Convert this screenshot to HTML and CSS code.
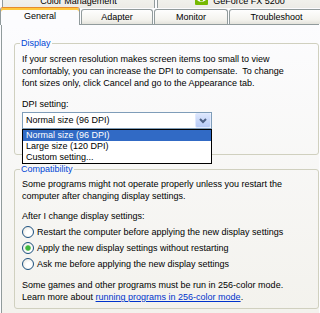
FILE: index.html
```html
<!DOCTYPE html>
<html lang="en">
<head>
  <meta charset="UTF-8" />
  <title>Display Properties - Advanced</title>
  <link rel="stylesheet" href="styles.css">
</head>
<body>
  <div class="tabs-back">
    <div class="tab-back color-tab"><span>Color Management</span></div>
    <div class="tab-back gpu-tab">
      <span>
        <svg class="nv" width="13" height="10" viewBox="0 0 13 10">
          <rect x="0" y="0" width="13" height="10" rx="1" fill="#76b900"/>
          <path d="M2 5 Q6 1 11 5 Q6 9 2 5Z" fill="#fff"/>
          <circle cx="6.5" cy="5" r="1.6" fill="#76b900"/>
        </svg>GeForce FX 5200
      </span>
    </div>
  </div>

  <div class="tabs-front">
    <div class="tab tab-active">General</div>
    <div class="tab adapter">Adapter</div>
    <div class="tab monitor">Monitor</div>
    <div class="tab trouble">Troubleshoot</div>
  </div>

  <div class="panel">
    <fieldset class="group display">
      <legend>Display</legend>
      <p>If your screen resolution makes screen items too small to view<br>comfortably, you can increase the DPI to compensate.&nbsp; To change<br>font sizes only, click Cancel and go to the Appearance tab.</p>
      <p class="label">DPI setting:</p>
      <div class="combo">
        <div class="combo-value">Normal size (96 DPI)</div>
        <span class="combo-btn">
          <svg width="14" height="13" viewBox="0 0 14 13">
            <path d="M4 5 L7 8 L10 5" fill="none" stroke="#4d6185" stroke-width="2"/>
          </svg>
        </span>
        <ul class="combo-list">
          <li class="sel">Normal size (96 DPI)</li>
          <li>Large size (120 DPI)</li>
          <li>Custom setting...</li>
        </ul>
      </div>
    </fieldset>

    <fieldset class="group compat">
      <legend>Compatibility</legend>
      <p>Some programs might not operate properly unless you restart the<br>computer after changing display settings.</p>
      <p class="after">After I change display settings:</p>
      <div class="option"><span class="radio"></span>Restart the computer before applying the new display settings</div>
      <div class="option"><span class="radio checked"></span>Apply the new display settings without restarting</div>
      <div class="option"><span class="radio"></span>Ask me before applying the new display settings</div>
      <p class="note">Some games and other programs must be run in 256-color mode.<br>Learn more about <a href="#">running programs in 256-color mode</a>.</p>
    </fieldset>
  </div>
</body>
</html>
```

FILE: styles.css
```css
* {
  margin: 0;
  padding: 0;
  box-sizing: border-box;
}

body {
  font-family: "Liberation Sans", Arial, sans-serif;
  font-size: 9px;
  color: #000;
  background: #fcfcfe;
  width: 320px;
  height: 313px;
  overflow: hidden;
}

/* back row of tabs, mostly cut off */
.tabs-back {
  display: flex;
  height: 8px;
  overflow: hidden;
  padding-left: 2px;
}

.tab-back {
  height: 8px;
  border-left: 1px solid #919b9c;
  border-right: 1px solid #919b9c;
  background: linear-gradient(#f1f1ec, #ecebe6);
  text-align: center;
  line-height: 13px;
  flex-shrink: 0;
}

.tab-back span {
  display: block;
  margin-top: -5px;
  white-space: nowrap;
}

.color-tab {
  width: 153px;
}

.gpu-tab {
  width: 166px;
  margin-left: 2px;
}

.nv {
  vertical-align: -1px;
  margin-right: 5px;
}

/* front row */
.tabs-front {
  display: flex;
  align-items: flex-end;
  height: 16px;
}

.tab {
  height: 15px;
  border: 1px solid #919b9c;
  border-bottom: none;
  border-radius: 3px 3px 0 0;
  background: linear-gradient(#fefefe, #f4f3ee 70%, #e4e3dc);
  text-align: center;
  line-height: 14px;
  margin-left: 1px;
  flex-shrink: 0;
  white-space: nowrap;
}

.tab-active {
  width: 80px;
  height: 18px;
  margin-left: 0;
  margin-bottom: -1px;
  line-height: 16px;
  background: #fcfcfe;
  border-top: 1px solid #e68b2c;
  box-shadow: inset 0 2px #ffc83c;
  position: relative;
  z-index: 1;
}

.adapter { width: 72px; }
.monitor { width: 74px; }
.trouble { width: 95px; }

.panel {
  margin-left: 1px;
  width: 318px;
  height: 289px;
  border-left: 1px solid #919b9c;
  border-top: 1px solid #919b9c;
  padding: 12px 0 0 12px;
  background: linear-gradient(#fcfcfe, #f3f2ed);
}

.group {
  border: 1px solid #d0d0bf;
  border-radius: 3px;
  padding: 3px 7px 25px;
  min-width: 0;
}

.group legend {
  color: #0046d5;
  padding: 0 1px;
  margin-left: -2px;
  line-height: 13px;
}

p {
  line-height: 12px;
  white-space: nowrap;
}

.label {
  margin-top: 9px;
}

.combo {
  position: relative;
  margin-top: 2px;
  width: 190px;
  height: 17px;
  border: 1px solid #7f9db9;
  background: #fff;
  display: flex;
}

.combo-value {
  flex: 1;
  line-height: 15px;
  padding-left: 3px;
}

.combo-btn {
  width: 16px;
  height: 15px;
  border: 1px solid #e1eafe;
  border-radius: 2px;
  background: linear-gradient(#dce6fd, #b7cbf6);
  display: flex;
  align-items: center;
  justify-content: center;
}

.combo-list {
  position: absolute;
  left: -1px;
  right: -1px;
  top: 16px;
  border: 1px solid #000;
  background: #fff;
  list-style: none;
  z-index: 2;
}

.combo-list li {
  height: 11px;
  line-height: 11px;
  padding-left: 3px;
}

.combo-list .sel {
  background: #316ac5;
  color: #fff;
}

.compat {
  margin-top: 8px;
  padding: 2px 7px 5px;
}

.after {
  margin-top: 6px;
  line-height: 16px;
}

.option {
  display: flex;
  align-items: center;
  gap: 3px;
  height: 16px;
  white-space: nowrap;
}

.radio {
  width: 12px;
  height: 12px;
  border: 1px solid #1c5180;
  border-radius: 50%;
  background: radial-gradient(circle at 60% 60%, #fff 0 30%, #e6e5dd 90%);
  flex-shrink: 0;
}

.radio.checked {
  background: radial-gradient(circle, #3fb73f 0 2px, #7dd07d 2.6px, transparent 3.2px),
              radial-gradient(circle at 60% 60%, #fff 0 30%, #e6e5dd 90%);
}

.note {
  margin-top: 7px;
}

.note a {
  color: #0033cc;
}
```
